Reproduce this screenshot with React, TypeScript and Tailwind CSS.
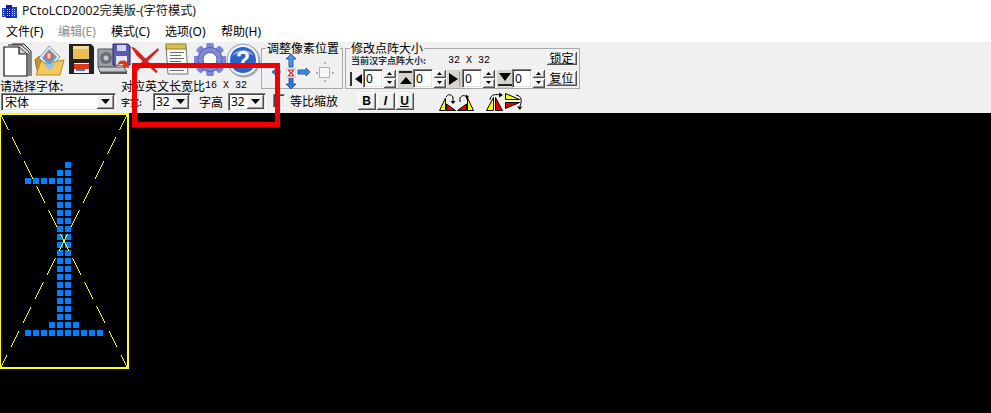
import React from "react";

const sunken = "border border-t-[#808080] border-l-[#808080] border-r-white border-b-white shadow-[inset_1px_1px_0_#404040,inset_-1px_-1px_0_#e3e3e3]";
const raised = "border-r border-b border-r-[#505050] border-b-[#505050] shadow-[inset_1px_1px_0_#ffffff,inset_-1px_-1px_0_#999999] bg-[#f0f0f0]";
const sans = "[font-family:'Noto_Sans','Noto_Sans_CJK_SC',sans-serif]";
const cjk = "[font-family:'Noto_Sans_CJK_SC','Noto_Sans',sans-serif]";
const mono = "[font-family:'Liberation_Mono',monospace]";

const cells: [number, number][] = [];
cells.push([8, 0], [7, 1], [8, 1]);
for (const c of [3, 4, 5, 6, 7, 8]) cells.push([c, 2]);
for (let r = 3; r <= 19; r++) cells.push([7, r], [8, r]);
for (const c of [6, 7, 8, 9]) cells.push([c, 20]);
for (let c = 3; c <= 12; c++) cells.push([c, 21]);

function Arrow() {
  return (
    <span className={`${raised} flex h-full w-[17px] items-center justify-center`}>
      <svg width="9" height="5" viewBox="0 0 9 5"><path d="M0 0h9L4.5 5z" fill="#000" /></svg>
    </span>
  );
}

function Combo({ text, w, big }: { text: string; w: string; big?: boolean }) {
  return (
    <div className={`${sunken} ${w} flex h-[18px] items-center justify-between bg-white p-[1px]`}>
      <span className={`${big ? "pl-[2px]" : "pl-[1px]"} text-[12px] ${big ? cjk : sans} leading-none text-black`}>{text}</span>
      <Arrow />
    </div>
  );
}

function Spin() {
  return (
    <div className="flex h-[18px] w-[12px] flex-col gap-[1px]">
      {[0, 1].map((i) => (
        <span key={i} className={`${raised} flex h-[8.5px] items-center justify-center`}>
          <svg width="5" height="3" viewBox="0 0 5 3">
            <path d={i === 0 ? "M2.5 0L5 3H0z" : "M0 0h5L2.5 3z"} fill="#000" />
          </svg>
        </span>
      ))}
    </div>
  );
}

function Edit() {
  return (
    <div className={`${sunken} flex h-[19px] w-[20px] shrink-0 items-center bg-white pl-[2px] text-[12px] leading-none text-black ${sans}`}>0</div>
  );
}

function Stepper({ dir, gray, w = 15 }: { dir: string; gray?: boolean; w?: number }) {
  const p: Record<string, React.ReactNode> = {
    l: <><rect x="1" y="2" width="2" height="14" fill="#333" /><path d="M13 4v10L6 9z" fill="#000" /></>,
    t: <><rect x="1" y="1" width="13" height="2" fill="#222" /><path d="M2 14h12L8 7z" fill="#000" /></>,
    r: <><path d="M2 3v12l9-6z" fill="#000" /><rect x="12" y="2" width="1" height="14" fill="#999" /></>,
    b: <><rect x="1" y="14" width="14" height="2" fill="#222" /><path d="M2 3h12L8 11z" fill="#000" /></>,
  };
  return (
    <svg width={w} height="18" viewBox={`0 0 ${w} 18`} className={`shrink-0 ${gray ? "bg-[#d5d3cc]" : ""}`}>
      {p[dir]}
    </svg>
  );
}

function StyleBtn({ t, cls }: { t: string; cls: string }) {
  return (
    <div className={`${raised} flex h-[17px] w-[18px] items-center justify-center text-[12px] font-bold leading-none text-black [font-family:'Liberation_Sans',sans-serif] ${cls}`}>{t}</div>
  );
}

function NewDoc() {
  return (
    <svg width="30" height="34" viewBox="0 0 30 34" className="shrink-0">
      <path d="M9 1h12l7 7v25" fill="#ddd" stroke="#222" strokeWidth="1" />
      <path d="M5 2h13l8 7v24" fill="#eee" stroke="#222" strokeWidth="1" />
      <path d="M1 4h15l8 7v22H1z" fill="#fff" stroke="#111" strokeWidth="1.2" />
      <path d="M16 4v7h8" fill="#ccc" stroke="#111" strokeWidth="1.2" />
    </svg>
  );
}
function Folder() {
  return (
    <svg width="32" height="34" viewBox="0 0 32 34" className="shrink-0">
      <path d="M2 17l3-3 9-1 2 3v15H5z" fill="#c9962c" stroke="#8a6a20" />
      <path d="M6 15L16 3l11 11-10 12z" fill="#e8eef2" stroke="#7a9ab0" />
      <path d="M9 15l7-9 8 8-8 9z" fill="#5b9fd6" />
      <circle cx="16" cy="13" r="4" fill="#e0604a" />
      <rect x="14.5" y="10.5" width="3" height="5" fill="#f6d7c6" />
      <path d="M3 32l5-14 7 4 5-3 11-2-4 15z" fill="#f4c85a" stroke="#b48a2a" />
      <path d="M11 22l6 5 6-7z" fill="#8cc3ea" />
    </svg>
  );
}
function Floppy() {
  return (
    <svg width="25" height="32" viewBox="0 0 25 32" className="shrink-0">
      <path d="M0 1h22l3 3v27H0z" fill="#222222" />
      <rect x="4" y="3" width="16" height="13" fill="#eabf57" />
      <rect x="4" y="3" width="16" height="3" fill="#f3dc95" />
      <rect x="5" y="20" width="15" height="10" fill="#f3f3f3" />
      <rect x="5" y="21" width="15" height="5" fill="#d93a1f" />
      <rect x="7" y="26" width="9" height="2" fill="#4a7dc8" />
    </svg>
  );
}
function SaveAs() {
  return (
    <svg width="34" height="32" viewBox="0 0 34 32" className="shrink-0">
      <path d="M1 6h18v18H1z" fill="#9aa0a8" stroke="#555" />
      <circle cx="9" cy="15" r="6" fill="#6b7078" />
      <circle cx="9" cy="15" r="2.5" fill="#c5c9cf" />
      <path d="M1 24h26l3 5H3z" fill="#c4c7cc" stroke="#555" />
      <path d="M3 29h27v2H3z" fill="#555" />
      <path d="M16 1h15l2 2v19H16z" fill="#5a5cb4" stroke="#262866" />
      <rect x="20" y="2" width="9" height="6" fill="#d4d6ee" />
      <rect x="19" y="13" width="11" height="9" fill="#e7e7f2" />
      <path d="M20 23c1-5 5-7 10-4l1-2 1 8-7-1 2-2c-3-2-5-1-7 1z" fill="#d43a1c" />
    </svg>
  );
}
function RedX() {
  return (
    <svg width="28" height="28" viewBox="0 0 28 28" className="mt-[3px] shrink-0">
      <path d="M0 1c4 0 6 3 13 10l14 15-2 1C17 20 10 14 6 10z" fill="#d5232a" />
      <path d="M27 2L14 13 1 25l3 2 10-9L28 4z" fill="#c9242c" />
    </svg>
  );
}
function Notepad() {
  return (
    <svg width="24" height="32" viewBox="0 0 24 32" className="shrink-0">
      <path d="M1 3h20l2 28H3z" fill="#f8f8f4" stroke="#777" />
      <rect x="1" y="1" width="20" height="5" fill="#d8c24a" stroke="#8a8240" />
      {[9, 12, 15, 18, 21, 24, 27].map((y) => (
        <rect key={y} x="5" y={y} width={y % 2 ? 14 : 11} height="1" fill="#6a6a72" />
      ))}
    </svg>
  );
}
function Gear() {
  const teeth = [0, 45, 90, 135, 180, 225, 270, 315];
  return (
    <svg width="32" height="33" viewBox="0 0 32 33" className="shrink-0">
      {teeth.map((a) => (
        <rect key={a} x="12.5" y="0" width="7" height="33" rx="1.5" fill="#7c86d6" transform={`rotate(${a} 16 16.5)`} />
      ))}
      <circle cx="16" cy="16.5" r="12.5" fill="#7f89da" />
      <circle cx="16" cy="16.5" r="12" fill="none" stroke="#5a62b0" strokeWidth="1" />
      <circle cx="16" cy="16.5" r="7" fill="#fff" stroke="#4f57a5" />
    </svg>
  );
}
function Help() {
  return (
    <svg width="35" height="35" viewBox="0 0 35 35" className="shrink-0">
      <circle cx="18" cy="18" r="16.5" fill="#777" opacity="0.55" />
      <circle cx="17" cy="17" r="16" fill="#eef2fb" stroke="#8f9ab8" />
      <circle cx="17" cy="17" r="13" fill="#2c63c8" />
      <path d="M6 13a12 10 0 0 1 22 0c-6-4-16-4-22 0z" fill="#7fa7ea" />
      <text x="17" y="25" textAnchor="middle" fontSize="23" fontWeight="700" fill="#fff" fontFamily="Liberation Sans">?</text>
    </svg>
  );
}

function MoveArrows() {
  return (
    <svg width="50" height="36" viewBox="0 0 50 36" className="shrink-0">
      <path d="M25 0l5 5h-3v8h-4V5h-3z" fill="#4a98e8" stroke="#1c3f88" strokeWidth="0.8" />
      <path d="M25 35l5-5h-3v-8h-4v8h-3z" fill="#2d78d8" stroke="#1c3f88" strokeWidth="0.8" />
      <path d="M6 18l5-4v2h3v4h-3v2z" fill="#3b7fd8" stroke="#1c3f88" strokeWidth="0.8" />
      <rect x="20.5" y="14.5" width="9" height="9" fill="#fff" stroke="#d8d8d8" />
      <path d="M22.5 16h5l-2 3 2 3h-5l2-3z" fill="none" stroke="#d8201c" strokeWidth="1.2" />
      <path d="M44 18l-4-4v2h-8v4h8v2z" fill="#3b8fe8" stroke="#1c3f88" strokeWidth="0.8" />
    </svg>
  );
}

function Preview() {
  return (
    <svg width="20" height="20" viewBox="0 0 20 20" className="shrink-0">
      <rect x="3.5" y="5.5" width="10" height="10" fill="#f8f8f8" stroke="#b0b0b0" />
      <rect x="8" y="0" width="2" height="2" fill="#b0b0b0" />
      <rect x="8" y="18" width="2" height="2" fill="#b0b0b0" />
      <rect x="0" y="10" width="2" height="2" fill="#b0b0b0" />
      <rect x="16" y="10" width="2" height="2" fill="#b0b0b0" />
    </svg>
  );
}

function Xform({ kind }: { kind: number }) {
  const shapes = [
    <g key="0"><path d="M0.5 18.5L6.5 6v12.5z" fill="#ffff00" stroke="#000" /><path d="M7.5 12l9 6.5h-9z" fill="#e80000" stroke="#000" /><path d="M7 5c2-3 5-3 7 0v5" fill="none" stroke="#000" /><path d="M14 12l-2.500-3h5z" fill="#000" /></g>,
    <g key="1"><path d="M0.500 18.500l9-6.500v6.500z" fill="#e80000" stroke="#000" /><path d="M10.500 18.500V6l6 12.500z" fill="#ffff00" stroke="#000" /><path d="M3 10V6c2-3 4-3 7-1" fill="none" stroke="#000" /><path d="M12 5l-3-2.500v5z" fill="#000" /></g>,
    <g key="2"><path d="M0.500 18.500l7-13v13z" fill="#ffff00" stroke="#000" /><path d="M9.500 5.500l7 13h-7z" fill="#e80000" stroke="#000" /><path d="M4 8c0-6 7-6 10-5" fill="none" stroke="#000" /><path d="M17 3l-4 2.500V0.500z" fill="#000" /></g>,
    <g key="3"><path d="M0.500 1.500l14 6h-14z" fill="#ffff00" stroke="#000" /><path d="M0.500 10.500h14l-14 6z" fill="#e80000" stroke="#000" /><path d="M11 3c6 1 6 6 4 11" fill="none" stroke="#000" /><path d="M15 18l-3-3.500h5z" fill="#000" /></g>,
  ];
  return <svg width="18" height="19" viewBox="0 0 18 19" className="shrink-0">{shapes[kind]}</svg>;
}

function Group({ title, width, children }: { title: string; width: string; children: React.ReactNode }) {
  return (
    <fieldset className={`${width} h-[47px] shrink-0 border border-[#a8a8a8]`}>
      <legend className={`ml-[4px] px-[1px] text-[12px] leading-[12px] text-black ${cjk}`}>{title}</legend>
      {children}
    </fieldset>
  );
}

export default function App() {
  return (
    <div className={`relative flex h-[413px] w-[991px] flex-col overflow-hidden bg-white ${cjk}`}>
      <div className="flex h-[22px] items-center">
        <svg width="15" height="13" viewBox="0 0 15 13" className="ml-[2px] shrink-0">
          <rect x="0" y="3" width="5" height="9" fill="#1f3fc0" />
          <rect x="4" y="0" width="6" height="13" fill="#0b1fa8" />
          <rect x="9" y="2" width="6" height="11" fill="#1f3fc0" />
          {[1, 5, 7, 10, 12].map((x) => [4, 6, 8, 10].map((y) => <rect key={`${x}-${y}`} x={x} y={y} width="1" height="1" fill="#ffe14a" />))}
        </svg>
        <span className={`ml-[5px] text-[12.2px] leading-none text-[#111] ${sans}`}>PCtoLCD2002完美版-(字符模式)</span>
      </div>

      <div className={`flex h-[20px] items-center pl-[6px] text-[12px] leading-none text-black ${sans}`}>
        <span className="w-[52px]">文件(F)</span>
        <span className="w-[53px] text-[#8c8c8c]">编辑(E)</span>
        <span className="w-[54px]">模式(C)</span>
        <span className="w-[56px]">选项(O)</span>
        <span>帮助(H)</span>
      </div>

      <div className="flex h-[71px] bg-[#f0f0f0]">
        <div className="flex w-[267px] shrink-0 flex-col">
          <div className="flex h-[36px] items-start pl-[3px] pt-[1px]">
            <NewDoc />
            <Folder />
            <div className="ml-[4px]"><Floppy /></div>
            <div className="ml-[3px]"><SaveAs /></div>
            <RedX />
            <div className="ml-[6px]"><Notepad /></div>
            <div className="ml-[5px]"><Gear /></div>
            <Help />
          </div>
          <div className="flex flex-1">
            <div className="flex w-[121px] shrink-0 flex-col">
              <span className="h-[15px] text-[12px] leading-[15px] text-black">请选择字体:</span>
              <div className="pl-[1px]"><Combo text="宋体" w="w-[115px]" big /></div>
            </div>
            <div className="flex flex-1 flex-col">
              <div className="flex h-[15px] items-center">
                <span className="w-[84px] text-[12px] leading-none text-black">对应英文长宽比</span>
                <span className={`text-[10px] leading-none text-black ${mono}`}>16 X 32</span>
              </div>
              <div className="flex items-center">
                <span className="w-[32px] text-[9px] font-bold leading-none text-[#1b2a44]">字宽:</span>
                <Combo text="32" w="w-[38px]" />
                <span className="ml-[8px] w-[29px] text-[12px] leading-none text-black">字高</span>
                <Combo text="32" w="w-[38px]" />
              </div>
            </div>
          </div>
        </div>

        <div className="-ml-[6px] flex flex-col">
          <div className="flex gap-[2px]">
            <Group title="调整像素位置" width="w-[82px]">
              <div className="flex items-center pl-[4px]">
                <MoveArrows />
                <Preview />
              </div>
            </Group>
            <Group title="修改点阵大小" width="w-[235px]">
              <div className="flex h-[34px] flex-col">
                <div className="flex h-[13px] items-center pl-[5px]">
                  <span className="w-[97px] text-[9px] font-bold leading-none text-[#26344c]">当前汉字点阵大小:</span>
                  <span className={`text-[10px] leading-none text-black ${mono}`}>32 X 32</span>
                  <div className="-mt-[4px] ml-auto mr-[2px]">
                    <div className={`${raised} flex h-[13px] w-[30px] items-center justify-center text-[12px] leading-none text-black`}>锁定</div>
                  </div>
                </div>
                <div className="flex items-center pl-[3px] pt-[2px]">
                  <Stepper dir="l" w={14} /><Edit /><div className="ml-[1px]"><Spin /></div>
                  <div className="ml-[2px]"><Stepper dir="t" gray /></div><Edit /><div className="ml-[1px]"><Spin /></div>
                  <div className="ml-[1px]"><Stepper dir="r" gray /></div><Edit /><div className="ml-[1px]"><Spin /></div>
                  <div className="ml-[2px]"><Stepper dir="b" gray /></div><Edit /><div className="ml-[1px]"><Spin /></div>
                  <div className={`${raised} ml-[2px] flex h-[15px] w-[30px] items-center justify-center text-[12px] leading-none text-black`}>复位</div>
                </div>
              </div>
            </Group>
          </div>
          <div className="flex flex-1 items-center">
            <div className={`${sunken} ml-[12px] h-[14px] w-[12px] bg-[#f0f0f0]`} />
            <span className="ml-[5px] w-[68px] text-[12px] leading-none text-black">等比缩放</span>
            <StyleBtn t="B" cls="" />
            <div className="ml-[1px]"><StyleBtn t="I" cls="italic" /></div>
            <div className="ml-[1px]"><StyleBtn t="U" cls="underline" /></div>
            <div className="ml-[25px] flex"><Xform kind={0} /><Xform kind={1} /></div>
            <div className="ml-[11px] flex gap-[1px]"><Xform kind={2} /><Xform kind={3} /></div>
          </div>
        </div>
      </div>

      <div className="flex-1 bg-black">
        <svg width="129" height="257" viewBox="0 113 129 257" className="block" shapeRendering="crispEdges">
          <rect x="0" y="113" width="129" height="2" fill="#ffff00" />
          <rect x="127" y="113" width="2" height="256" fill="#ffff00" />
          <rect x="0" y="367" width="129" height="2" fill="#ffff00" />
          <rect x="0" y="113" width="1" height="256" fill="#ffff00" />
          {cells.map(([c, r]) => (
            <rect key={`${c}-${r}`} x={1 + 8 * c} y={162 + 8 * r} width="6" height="6" fill="#0080ff" />
          ))}
          <path d="M1 115L127 367" stroke="#ffff00" strokeDasharray="19 8" strokeDashoffset="2" fill="none" />
          <path d="M127 115L1 367" stroke="#ffff00" strokeDasharray="19 8" strokeDashoffset="2" fill="none" />
        </svg>
      </div>

      <div className="pointer-events-none absolute left-[132px] top-[63px] h-[64px] w-[148px] border-[5px] border-[#f00000]" />
    </div>
  );
}
